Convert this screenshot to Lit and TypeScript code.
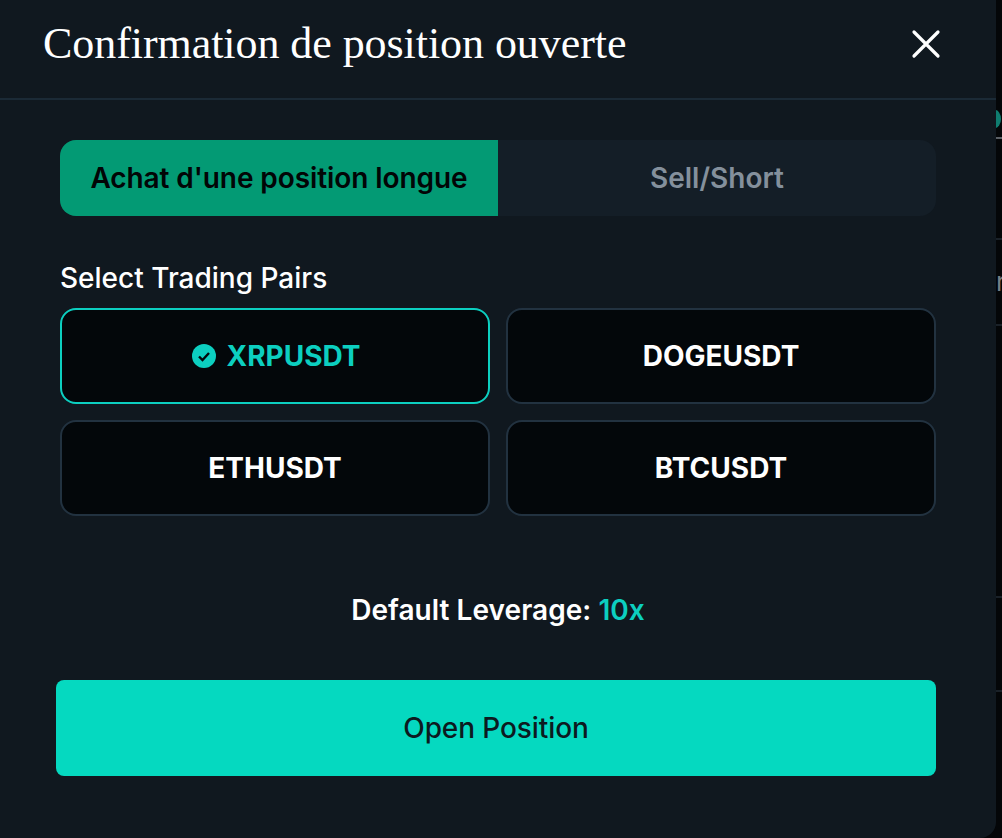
import { LitElement, html, css } from "lit";
import { customElement } from "lit/decorators.js";

@customElement("app-root")
export class AppRoot extends LitElement {
  static styles = css`
    :host { display: block; width: 1002px; height: 838px; background: #040608; overflow: hidden; }
    * { box-sizing: border-box; }
    .page { display: flex; width: 1002px; height: 838px; }
    .panel { width: 996px; height: 838px; flex: none; background: #10181f; border-radius: 0 0 16px 0; font-family: Inter, sans-serif; display: flex; flex-direction: column; }
    .head { height: 100px; flex: none; border-bottom: 2px solid #1b2a36; display: flex; align-items: center; justify-content: space-between; padding: 0 54px 10px 43px; }
    h1 { margin: 0; font: 400 44px/48px "Liberation Serif", serif; color: #fff; letter-spacing: -0.06px; }
    .close { display: block; width: 32px; height: 32px; }
    .body { padding: 40px 60px 0; display: flex; flex-direction: column; }
    .tabs { display: grid; grid-template-columns: 438px 438px; height: 76px; background: #141e27; border-radius: 16px; overflow: hidden; font-size: 28px; font-weight: 600; }
    .tab { display: flex; align-items: center; justify-content: center; color: #84909c; }
    .tab.on { background: #039a74; color: #020506; letter-spacing: -0.08px; }
    .label { margin-top: 44px; font-size: 28px; line-height: 36px; font-weight: 500; color: #fff; }
    .grid { margin-top: 12px; display: grid; grid-template-columns: 430px 430px; gap: 16px; }
    .pair { height: 96px; background: #03070a; border: 2px solid #223240; border-radius: 16px; display: flex; align-items: center; justify-content: center; gap: 10px; color: #fff; font-size: 28px; font-weight: 700; }
    .pair.on { border-color: #0ccfc0; color: #0ccfc0; padding-left: 3px; }
    .pair svg { width: 24px; height: 24px; display: block; }
    .lev { margin-top: 76px; text-align: center; font-size: 28px; line-height: 36px; font-weight: 600; color: #fff; letter-spacing: 0.05px; }
    .lev span { color: #0ccfc0; }
    .open { margin: 52px 0 0 -4px; width: 880px; height: 96px; background: #05d9c0; border-radius: 8px; display: flex; align-items: center; justify-content: center; font-size: 28px; font-weight: 500; color: #0c1a20; letter-spacing: -0.1px; }
    .strip { width: 6px; flex: none; position: relative; overflow: hidden; }
    .line { position: absolute; left: 0; width: 6px; height: 2px; background: #1a2128; }
    .line.light { background: #5b6066; }
    .dot { position: absolute; left: -7px; top: 110px; width: 12px; height: 18px; border-radius: 50%; background: #0f7d70; }
    .r { position: absolute; left: 0; top: 268px; font: 400 26px/28px Inter, sans-serif; color: #777f87; }
  `;

  render() {
    const pairs = ["XRPUSDT", "DOGEUSDT", "ETHUSDT", "BTCUSDT"];
    const lines = [238, 324, 596, 690];
    return html`<div class="page">
      <section class="panel">
        <header class="head">
          <h1>Confirmation de position ouverte</h1>
          <svg class="close" viewBox="0 0 32 32" fill="none" stroke="#fff" stroke-width="3.2" stroke-linecap="round"><path d="M4 4 28 28M28 4 4 28"/></svg>
        </header>
        <div class="body">
          <div class="tabs"><div class="tab on">Achat d'une position longue</div><div class="tab">Sell/Short</div></div>
          <div class="label">Select Trading Pairs</div>
          <div class="grid">
            ${pairs.map((p, i) => html`<div class="pair ${i === 0 ? "on" : ""}">
              ${i === 0 ? html`<svg viewBox="0 0 24 24"><circle cx="12" cy="12" r="12" fill="#0ccfc0"/><path d="M7 12.5l3.5 3.5L17 9" fill="none" stroke="#02090b" stroke-width="2.4"/></svg>` : ""}
              ${p}</div>`)}
          </div>
          <div class="lev">Default Leverage: <span>10x</span></div>
          <div class="open">Open Position</div>
        </div>
      </section>
      <div class="strip">
        <div class="dot"></div>
        <div class="line light" style="top:137px"></div>
        <div class="r">r</div>
        ${lines.map((t) => html`<div class="line" style="top:${t}px"></div>`)}
      </div>
    </div>`;
  }
}
